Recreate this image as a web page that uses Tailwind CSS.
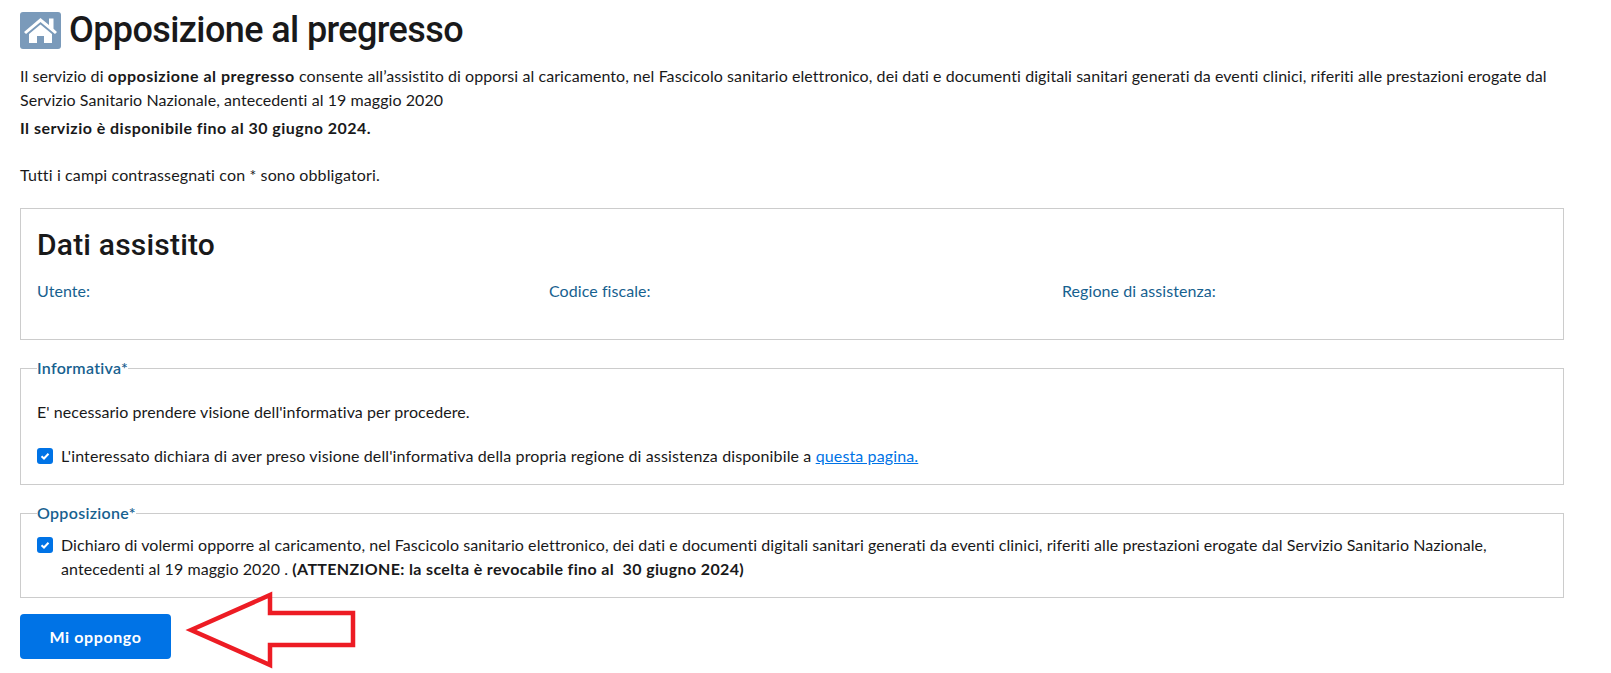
<!DOCTYPE html>
<html lang="it">

<head>
    <meta charset="UTF-8">
    <meta name="viewport" content="width=device-width, initial-scale=1.0">
    <title>Opposizione al pregresso</title>
    <script src="https://cdn.jsdelivr.net/npm/@tailwindcss/browser@4"></script>
</head>

<body class="bg-white font-['Lato',sans-serif] text-[16px] leading-[24px] tracking-[0.07px] text-[#19191a] overflow-hidden">

    <div class="relative pl-5 pr-[47px] h-[673px] overflow-hidden">

        <!-- Titolo -->
        <div class="flex items-center gap-2 h-[60px]">
            <span class="w-[41px] h-[37px] rounded-[3px] bg-[#7a9aba] flex items-center justify-center">
                <svg viewBox="0 0 41 37" class="w-[41px] h-[37px]">
                    <path d="M4 20 L20.5 6 L29 13 V6.500 H33.500 V16.800 L37 20 L35 22 L20.500 10 L6 22 Z" fill="#fff"/>
                    <path d="M9 22 L20.500 12.500 L32 22 V31 H24 V24 H17 V31 H9 Z" fill="#fff"/>
                </svg>
            </span>
            <h1 class="font-['Roboto',sans-serif] text-[36px] leading-[44px] font-medium tracking-[-0.6px]">Opposizione al pregresso</h1>
        </div>

        <!-- Introduzione -->
        <p class="mt-[4px]">Il servizio di <strong class="font-bold tracking-[0.5px]">opposizione al pregresso</strong> consente all’assistito di opporsi al caricamento, nel Fascicolo sanitario elettronico, dei dati e documenti digitali sanitari generati da eventi clinici, riferiti alle prestazioni erogate dal Servizio Sanitario Nazionale, antecedenti al 19 maggio 2020</p>
        <p class="mt-[4px] font-bold tracking-[0.47px]">Il servizio è disponibile fino al 30 giugno 2024.</p>
        <p class="mt-[23px] tracking-[0.13px]">Tutti i campi contrassegnati con * sono obbligatori.</p>

        <!-- Dati assistito -->
        <section class="mt-[21px] h-[132px] border border-[#ccc] px-4 pt-[16px]">
            <h2 class="font-['Roboto',sans-serif] text-[30px] leading-[40px] font-medium tracking-[0.2px]">Dati assistito</h2>
            <div class="grid grid-cols-[512px_513px_1fr] mt-[14px] text-[#17618f]">
                <span>Utente:</span>
                <span>Codice fiscale:</span>
                <span>Regione di assistenza:</span>
            </div>
        </section>

        <!-- Informativa -->
        <fieldset class="mt-[16px] h-[129px] border border-[#ccc] px-4">
            <legend class="font-semibold tracking-[0.3px] text-[#17618f]">Informativa*</legend>
            <p class="mt-[20px]">E' necessario prendere visione dell'informativa per procedere.</p>
            <label class="flex gap-2 mt-[20px]">
                <span class="mt-[4px] w-4 h-4 shrink-0 rounded-[3px] bg-[#0073e6] flex items-center justify-center">
                    <svg viewBox="0 0 16 16" class="w-4 h-4"><path d="M4.500 8.200 L7 10.500 L11.500 5.800" fill="none" stroke="#fff" stroke-width="2"/></svg>
                </span>
                <span class="tracking-[0.13px]">L'interessato dichiara di aver preso visione dell'informativa della propria regione di assistenza disponibile a <a href="#" class="text-[#0073e6] underline">questa pagina.</a></span>
            </label>
        </fieldset>

        <!-- Opposizione -->
        <fieldset class="mt-[16px] h-[97px] border border-[#ccc] px-4">
            <legend class="font-semibold tracking-[0.3px] text-[#17618f]">Opposizione*</legend>
            <label class="flex gap-2 mt-[8px]">
                <span class="mt-[4px] w-4 h-4 shrink-0 rounded-[3px] bg-[#0073e6] flex items-center justify-center">
                    <svg viewBox="0 0 16 16" class="w-4 h-4"><path d="M4.500 8.200 L7 10.500 L11.500 5.800" fill="none" stroke="#fff" stroke-width="2"/></svg>
                </span>
                <span>Dichiaro di volermi opporre al caricamento, nel Fascicolo sanitario elettronico, dei dati e documenti digitali sanitari generati da eventi clinici, riferiti alle prestazioni erogate dal Servizio Sanitario Nazionale, antecedenti al 19 maggio 2020 . <strong class="font-bold tracking-[0.36px]">(ATTENZIONE: la scelta è revocabile fino al &nbsp;30 giugno 2024)</strong></span>
            </label>
        </fieldset>

        <button class="mt-[16px] w-[151px] h-[45px] rounded-[4px] bg-[#0073e6] text-white font-bold tracking-[0.6px]">Mi oppongo</button>

        <!-- Freccia -->
        <svg class="absolute left-[180px] top-[588px] w-[180px] h-[85px]" viewBox="180 588 180 85">
            <polygon points="191,630 270,595 270,613 353,613 353,645 270,645 270,665" fill="none" stroke="#ed1c24" stroke-width="4.500"/>
        </svg>
    </div>

</body>

</html>
